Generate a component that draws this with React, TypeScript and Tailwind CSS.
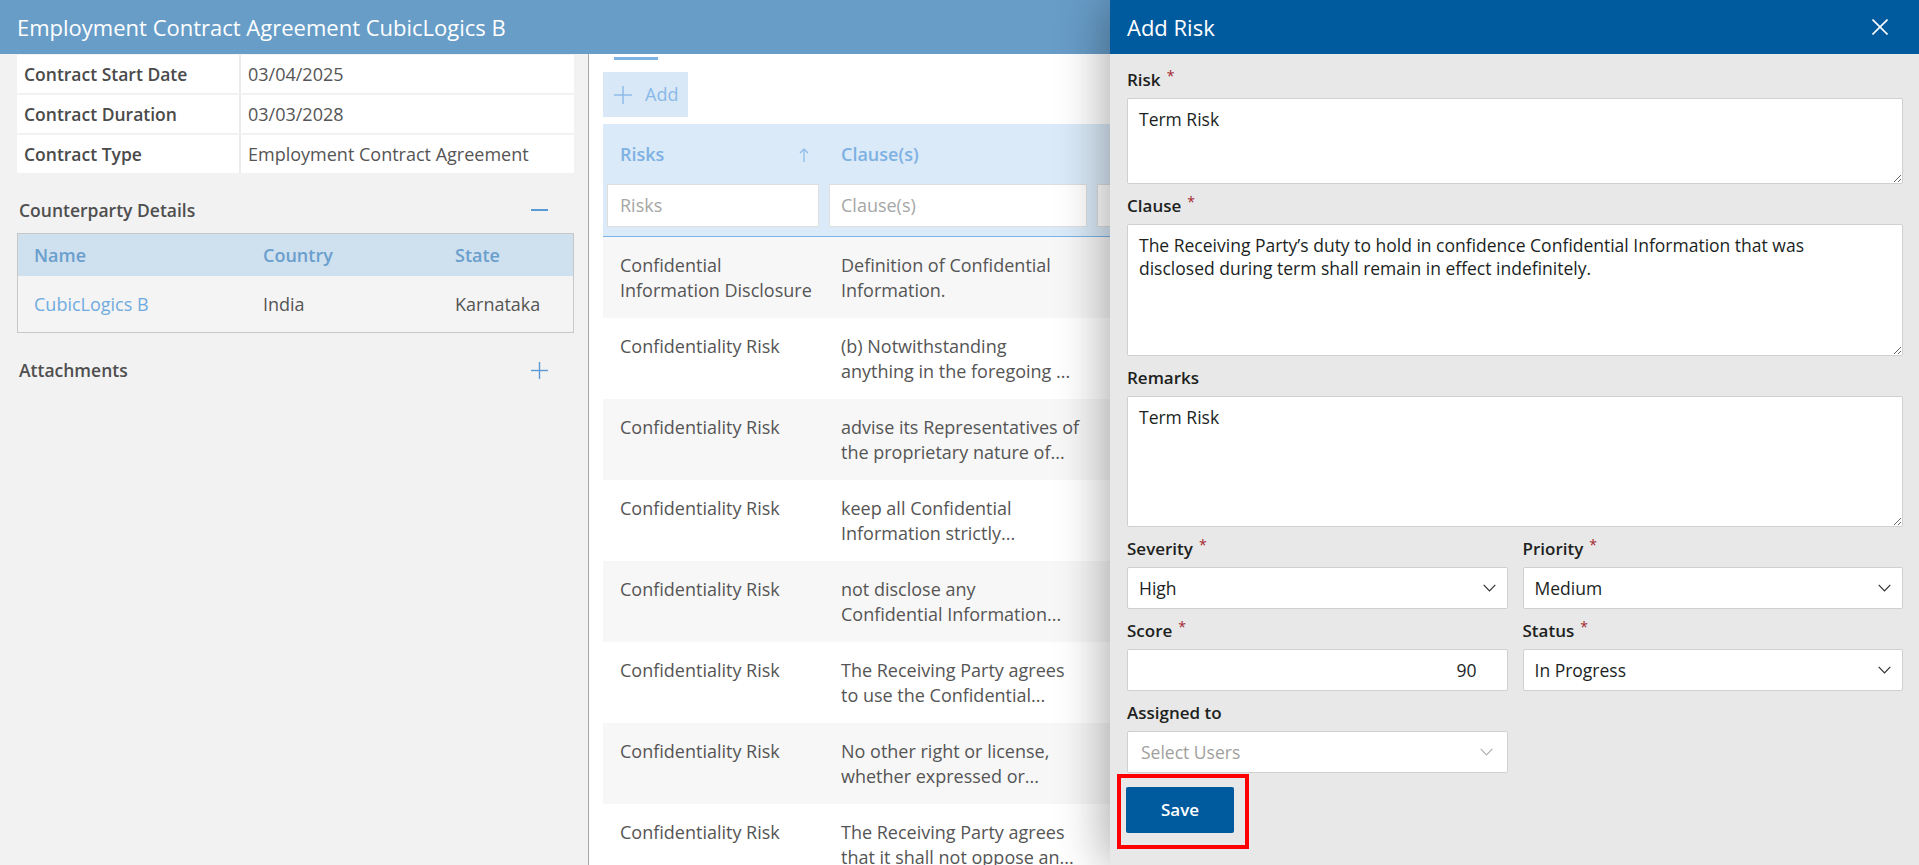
import React from "react";

const riskRows: { risk: string[]; clause: string[] }[] = [
  { risk: ["Confidential", "Information Disclosure"], clause: ["Definition of Confidential", "Information."] },
  { risk: ["Confidentiality Risk"], clause: ["(b) Notwithstanding", "anything in the foregoing ..."] },
  { risk: ["Confidentiality Risk"], clause: ["advise its Representatives of", "the proprietary nature of..."] },
  { risk: ["Confidentiality Risk"], clause: ["keep all Confidential", "Information strictly..."] },
  { risk: ["Confidentiality Risk"], clause: ["not disclose any", "Confidential Information..."] },
  { risk: ["Confidentiality Risk"], clause: ["The Receiving Party agrees", "to use the Confidential..."] },
  { risk: ["Confidentiality Risk"], clause: ["No other right or license,", "whether expressed or..."] },
  { risk: ["Confidentiality Risk"], clause: ["The Receiving Party agrees", "that it shall not oppose an..."] },
];

function Chevron({ color = "#323130" }: { color?: string }) {
  return (
    <svg width="13" height="8" viewBox="0 0 13 8" fill="none">
      <polyline points="0.7,0.8 6.5,6.8 12.3,0.8" stroke={color} strokeWidth="1.2" fill="none" />
    </svg>
  );
}

function Label({ text, req }: { text: string; req?: boolean }) {
  return (
    <div className="h-[24px] mt-[10px] mb-[6px] flex items-start text-[17px] leading-[24px] font-semibold text-[#201f1e]">
      <span>{text}</span>
      {req && <span className="ml-[6px] text-[14px] leading-[16px] font-normal text-[#a4262c]">*</span>}
    </div>
  );
}

function SelectBox({ value, placeholder }: { value?: string; placeholder?: string }) {
  return (
    <div className="h-[42px] bg-white border border-[#d2d0ce] rounded-[2px] flex items-center justify-between pl-[11px] pr-[11px] text-[17.5px]">
      {value ? (
        <span className="text-[#201f1e]">{value}</span>
      ) : (
        <span className="text-[#a19f9d] pl-[2px]">{placeholder}</span>
      )}
      <span className={placeholder ? "pr-[3px]" : ""}>
        <Chevron color={placeholder ? "#b3b0ad" : "#323130"} />
      </span>
    </div>
  );
}

export default function App() {
  return (
    <div className="relative w-[1919px] h-[865px] overflow-hidden bg-white font-['Open_Sans',sans-serif]">
      {/* Top header */}
      <div className="h-[54px] bg-[#689dc8] flex items-center pl-[17px]">
        <span className="text-white text-[22px]">Employment Contract Agreement CubicLogics B</span>
      </div>

      <div className="flex h-[811px]">
        {/* Left panel */}
        <div className="w-[589px] shrink-0 border-r border-[#a6a6a6] bg-[#f2f2f2] pl-[17px] pr-[14px] pt-[1px]">
          <div className="flex flex-col gap-[2px] bg-[#f2f2f2]">
            {[
              ["Contract Start Date", "03/04/2025"],
              ["Contract Duration", "03/03/2028"],
              ["Contract Type", "Employment Contract Agreement"],
            ].map(([k, v]) => (
              <div key={k} className="grid grid-cols-[222px_1fr] gap-[2px] h-[38px] bg-[#ebebeb]">
                <div className="bg-white flex items-center pl-[7px] text-[17.5px] font-semibold text-[#4a4a4a]">{k}</div>
                <div className="bg-white flex items-center pl-[7px] text-[18px] text-[#555555]">{v}</div>
              </div>
            ))}
          </div>

          <div className="mt-[25px] h-[24px] flex items-center justify-between pl-[2px] pr-[26px]">
            <span className="text-[17.5px] font-semibold text-[#4f4f4f]">Counterparty Details</span>
            <span className="block w-[17px] h-[1.5px] bg-[#5b9bd5]" />
          </div>

          <div className="mt-[11px] border border-[#c8c8c8]">
            <div className="grid grid-cols-[229px_192px_1fr] h-[42px] bg-[#cfe0ef] items-center text-[18px] font-semibold text-[#6a9fcd]">
              <div className="pl-[16px]">Name</div>
              <div className="pl-[16px]">Country</div>
              <div className="pl-[16px]">State</div>
            </div>
            <div className="grid grid-cols-[229px_192px_1fr] h-[56px] bg-[#f4f4f4] items-center text-[18px] text-[#555555]">
              <div className="pl-[16px] text-[#70abe0]">CubicLogics B</div>
              <div className="pl-[16px]">India</div>
              <div className="pl-[16px]">Karnataka</div>
            </div>
          </div>

          <div className="mt-[25px] h-[24px] flex items-center justify-between pl-[2px] pr-[26px]">
            <span className="text-[17.5px] font-semibold text-[#4f4f4f]">Attachments</span>
            <svg width="17" height="17" viewBox="0 0 17 17">
              <line x1="8.5" y1="0" x2="8.5" y2="17" stroke="#5b9bd5" strokeWidth="1.4" />
              <line x1="0" y1="8.5" x2="17" y2="8.5" stroke="#5b9bd5" strokeWidth="1.4" />
            </svg>
          </div>
        </div>

        {/* Middle panel */}
        <div className="flex-1 bg-white pl-[14px] pt-[3px]">
          <div className="ml-[11px] w-[44px] h-[3px] bg-[#7fb3e4]" />
          <div className="mt-[12px] w-[85px] h-[45px] bg-[#d8e8f7] flex items-center pl-[11px] gap-[13px]">
            <svg width="18" height="18" viewBox="0 0 18 18">
              <line x1="9" y1="0" x2="9" y2="18" stroke="#8ab9e8" strokeWidth="1.4" />
              <line x1="0" y1="9" x2="18" y2="9" stroke="#8ab9e8" strokeWidth="1.4" />
            </svg>
            <span className="text-[18px] text-[#8ab9e8]">Add</span>
          </div>

          <div className="mt-[7px]">
            <div className="bg-[#daeaf8] border-b border-[#7cb3e6] pt-[18px] pb-[9px]">
              <div className="grid grid-cols-[221px_268px_1fr] leading-[25px] text-[18px] font-semibold text-[#7eb1e2]">
                <div className="pl-[17px] pr-[15px] flex items-center justify-between">
                  <span>Risks</span>
                  <svg width="10" height="14" viewBox="0 0 10 14">
                    <line x1="5" y1="1" x2="5" y2="14" stroke="#8ab9e8" strokeWidth="1.2" />
                    <polyline points="1,5 5,1 9,5" stroke="#8ab9e8" strokeWidth="1.2" fill="none" />
                  </svg>
                </div>
                <div className="pl-[17px]">Clause(s)</div>
                <div className="pl-[17px]">Severity</div>
              </div>
              <div className="mt-[17px] grid grid-cols-[221px_268px_1fr]">
                <div className="pl-[4px] pr-[5px]">
                  <div className="h-[43px] bg-white border border-[#dedede] flex items-center pl-[12px] text-[18px] text-[#a6a6a6]">Risks</div>
                </div>
                <div className="px-[5px]">
                  <div className="h-[43px] bg-white border border-[#dedede] flex items-center pl-[11px] text-[18px] text-[#a6a6a6]">Clause(s)</div>
                </div>
                <div className="px-[5px]">
                  <div className="h-[43px] w-[220px] bg-white border border-[#dedede]" />
                </div>
              </div>
            </div>

            {riskRows.map((r, i) => (
              <div
                key={i}
                className={`grid grid-cols-[221px_268px_1fr] pt-[16px] pb-[15px] leading-[25px] text-[18px] text-[#555555] ${i % 2 === 0 ? "bg-[#f7f7f7]" : "bg-white"}`}
              >
                <div className="pl-[17px]">
                  {r.risk.map((l) => (
                    <div key={l} className="whitespace-nowrap">{l}</div>
                  ))}
                </div>
                <div className="pl-[17px]">
                  {r.clause.map((l) => (
                    <div key={l} className="whitespace-nowrap">{l}</div>
                  ))}
                </div>
                <div />
              </div>
            ))}
          </div>
        </div>
      </div>

      {/* Add Risk drawer overlay */}
      <div className="absolute top-0 right-0 w-[809px] h-[865px] bg-[#e8e8e8] shadow-[-6px_0_45px_rgba(0,0,0,0.32)] flex flex-col">
        <div className="h-[54px] shrink-0 bg-[#005a9e] flex items-center justify-between pl-[17px] pr-[31px]">
          <span className="text-white text-[22px]">Add Risk</span>
          <svg width="16" height="16" viewBox="0 0 16 16">
            <line x1="0.5" y1="0.5" x2="15.5" y2="15.5" stroke="#ffffff" strokeWidth="1.6" />
            <line x1="15.5" y1="0.5" x2="0.5" y2="15.5" stroke="#ffffff" strokeWidth="1.6" />
          </svg>
        </div>

        <div className="pl-[17px] pr-[16px] pt-[4px] text-[17.5px] text-[#201f1e]">
          <Label text="Risk" req />
          <textarea
            readOnly
            defaultValue="Term Risk"
            className="block w-full h-[86px] bg-white border border-[#d2d0ce] rounded-[2px] px-[11px] pt-[9px] leading-[23px] text-[17.5px] text-[#201f1e] outline-none"
          />
          <Label text="Clause" req />
          <textarea
            readOnly
            defaultValue={"The Receiving Party’s duty to hold in confidence Confidential Information that was disclosed during term shall remain in effect indefinitely."}
            className="block w-full h-[132px] bg-white border border-[#d2d0ce] rounded-[2px] pl-[11px] pr-[44px] pt-[9px] leading-[23px] text-[17.5px] text-[#201f1e] outline-none"
          />
          <Label text="Remarks" />
          <textarea
            readOnly
            defaultValue="Term Risk"
            className="block w-full h-[131px] bg-white border border-[#d2d0ce] rounded-[2px] px-[11px] pt-[9px] leading-[23px] text-[17.5px] text-[#201f1e] outline-none"
          />

          <div className="grid grid-cols-2 gap-x-[15px]">
            <div>
              <Label text="Severity" req />
              <SelectBox value="High" />
            </div>
            <div>
              <Label text="Priority" req />
              <SelectBox value="Medium" />
            </div>
            <div>
              <Label text="Score" req />
              <div className="h-[42px] bg-white border border-[#d2d0ce] rounded-[2px] flex items-center justify-end pr-[30px] text-[17.5px] text-[#201f1e]">90</div>
            </div>
            <div>
              <Label text="Status" req />
              <SelectBox value="In Progress" />
            </div>
            <div>
              <Label text="Assigned to" />
              <SelectBox placeholder="Select Users" />
            </div>
          </div>

          <div className="ml-[-10px] mt-[1px] w-[132px] h-[75px] border-[4px] border-[#ff0000] pl-[5px] pt-[9px]">
            <div className="w-[108px] h-[46px] bg-[#005a9e] rounded-[2px] flex items-center justify-center text-white text-[17px] font-semibold">
              Save
            </div>
          </div>
        </div>
      </div>
    </div>
  );
}
